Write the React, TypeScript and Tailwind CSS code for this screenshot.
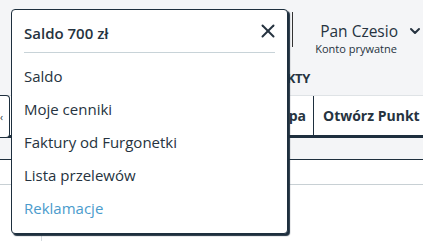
import { X, ChevronDown } from 'lucide-react'

const ITEMS = [
  { label: 'Saldo', active: false },
  { label: 'Moje cenniki', active: false },
  { label: 'Faktury od Furgonetki', active: false },
  { label: 'Lista przelewów', active: false },
  { label: 'Reklamacje', active: true },
]

export default function App() {
  return (
    <div className="relative w-[423px] h-[241px] overflow-hidden bg-[#f4f5f7] text-[#263340] font-['Open_Sans',sans-serif]">
      {/* Top bar */}
      <div className="flex h-[60px] items-start pt-[12px]">
        <div className="w-[300px] h-[35px] border-r border-[#333]" />
        <div className="flex flex-col items-start pl-[22px] pt-[11px] whitespace-nowrap">
          <div className="flex items-center gap-[9px] ml-[5px] text-[15.5px] leading-[16px]">
            <span>Pan Czesio</span>
            <ChevronDown className="w-[16px] h-[16px]" strokeWidth={3} />
          </div>
          <span className="text-[11px] leading-[12px] mt-[4px]">Konto prywatne</span>
        </div>
      </div>

      {/* Nav row */}
      <div className="flex h-[35px] items-center">
        <div className="w-[310px] text-right text-[13px] font-bold tracking-tight leading-[16px]">KONTAKTY</div>
      </div>

      {/* Tabs */}
      <div className="flex h-[43px] bg-white border-t border-[#dfe3e6] border-b-[3px] border-b-[#1e2f3e]">
        <div className="w-[10px] -mt-px -mb-[3px] bg-white border border-l-0 border-[#1e2f3e] rounded-r-[4px] flex items-center text-[10px] leading-none">‹</div>
        <div className="w-[304px] flex items-center justify-end pr-[7px] border-r border-[#1e2f3e] text-[14px] font-bold">Mapa</div>
        <div className="flex items-center pl-[9px] text-[14px] font-bold whitespace-nowrap">Otwórz Punkt</div>
      </div>

      {/* Table header band */}
      <div className="h-[22px] bg-[#f4f5f7] border-b border-[#1e2f3e]" />
      <div className="h-[25px] bg-white border-b border-[#c8d0d4]" />
      <div className="h-[60px] bg-white">
        <div className="w-[42px] h-full border-r border-[#d5dbdf]" />
      </div>

      {/* Dropdown */}
      <div className="absolute left-[11px] top-[9px] w-[277px] h-[225px] bg-white border border-[#1e2f3e] rounded-[4px] shadow-[2px_2px_1px_#1e2f3e] px-[12px]">
        <div className="flex items-center justify-between h-[43px] border-b border-[#c8d3d8]">
          <span className="text-[15px] font-semibold leading-[18px] pt-[3px]">Saldo 700 zł</span>
          <X className="w-[22px] h-[22px] mr-[-4px]" strokeWidth={2.2} />
        </div>
        <div className="flex flex-col pt-[7px]">
          {ITEMS.map(item => (
            <div
              key={item.label}
              className={`h-[33px] flex items-center text-[15px] ${item.active ? 'text-[#4a9bcc]' : 'text-[#263340]'}`}
            >
              {item.label}
            </div>
          ))}
        </div>
      </div>
    </div>
  )
}
